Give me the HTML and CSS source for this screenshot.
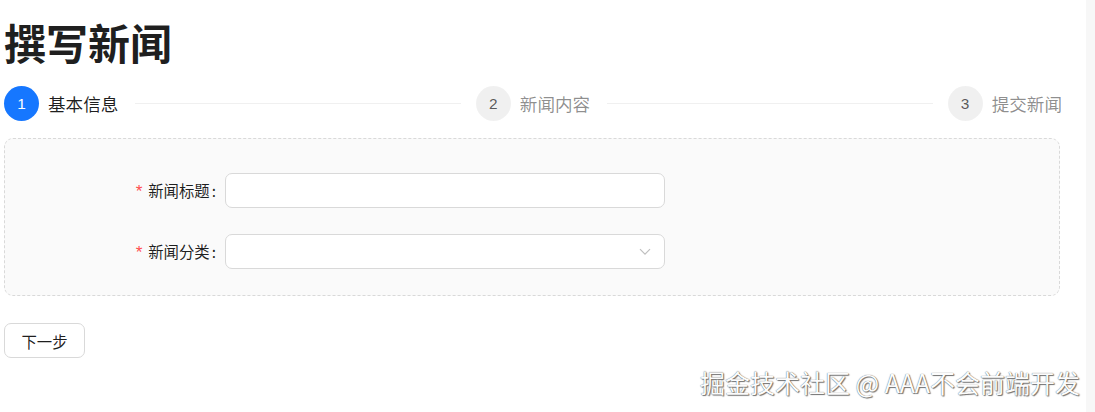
FILE: index.html
```html
<!DOCTYPE html>
<html lang="zh-CN">
<head>
<meta charset="utf-8">
<title>撰写新闻</title>
<link rel="stylesheet" href="styles.css">
</head>
<body>
<div class="page">
  <main class="main">
    <h1 class="title">撰写新闻</h1>
    <div class="steps">
      <div class="step active">
        <span class="step-icon">1</span>
        <span class="step-title">基本信息</span>
        <span class="step-line"></span>
      </div>
      <div class="step">
        <span class="step-icon">2</span>
        <span class="step-title">新闻内容</span>
        <span class="step-line"></span>
      </div>
      <div class="step last">
        <span class="step-icon">3</span>
        <span class="step-title">提交新闻</span>
      </div>
    </div>
    <div class="card">
      <div class="form-row">
        <label class="form-label"><span class="req">*</span>新闻标题<span class="colon">:</span></label>
        <div class="input"></div>
      </div>
      <div class="form-row">
        <label class="form-label"><span class="req">*</span>新闻分类<span class="colon">:</span></label>
        <div class="input select">
          <svg class="arrow" width="12" height="8" viewBox="0 0 12 8"><path d="M1 1.2 L6 6.2 L11 1.2" fill="none" stroke="#bfbfbf" stroke-width="1.2"/></svg>
        </div>
      </div>
    </div>
    <button class="btn">下一步</button>
  </main>
  <div class="scrollbar"></div>
</div>
<div class="watermark">掘金技术社区 @ AAA不会前端开发</div>
</body>
</html>
```
FILE: styles.css
```css
html, body {
  margin: 0;
  padding: 0;
  background: #fff;
  font-family: "Noto Sans CJK SC", "Noto Sans", sans-serif;
  color: rgba(0,0,0,0.88);
}
.page {
  display: flex;
  width: 1095px;
  height: 412px;
  overflow: hidden;
}
.main {
  width: 1058px;
  padding-left: 4px;
  flex: none;
}
.scrollbar {
  margin-left: auto;
  width: 9px;
  background: #f7f7f7;
  height: 412px;
}
.title {
  margin: 18px 0 0;
  font-size: 42px;
  line-height: 48px;
  font-weight: 700;
  color: rgba(0,0,0,0.88);
}
.steps {
  display: flex;
  margin-top: 20px;
  height: 35px;
  align-items: center;
}
.step {
  flex: 1;
  display: flex;
  align-items: center;
  min-width: 0;
}
.step + .step { padding-left: 15px; }
.step.last { flex: none; }
.step-icon {
  width: 35px;
  height: 35px;
  border-radius: 50%;
  background: rgba(0,0,0,0.06);
  color: rgba(0,0,0,0.65);
  font-family: "Liberation Sans", sans-serif;
  font-size: 15.4px;
  display: flex;
  align-items: center;
  justify-content: center;
  flex: none;
}
.step.active .step-icon {
  background: #1677ff;
  color: #fff;
}
.step-title {
  margin-left: 9px;
  font-size: 17.6px;
  line-height: 35px;
  color: rgba(0,0,0,0.45);
  white-space: nowrap;
}
.step.active .step-title { color: rgba(0,0,0,0.88); }
.step-line {
  flex: 1;
  height: 1px;
  background: rgba(5,5,5,0.06);
  margin-left: 17px;
}
.card {
  margin-top: 17px;
  width: 1054px;
  border: 1px dashed #d9d9d9;
  border-radius: 9px;
  background: #fafafa;
  padding: 34px 0 26px;
  display: flex;
  flex-direction: column;
  gap: 26px;
}
.form-row {
  display: grid;
  grid-template-columns: 220px 440px;
  align-items: center;
}
.form-label {
  text-align: right;
  font-size: 15.4px;
  padding-right: 9px;
  white-space: nowrap;
}
.colon {
  margin-left: 2px;
}
.req {
  color: #ff4d4f;
  font-family: "Liberation Mono", monospace;
  font-size: 17px;
  margin-right: 4px;
}
.input {
  height: 35px;
  box-sizing: border-box;
  border: 1px solid #d9d9d9;
  border-radius: 7px;
  background: #fff;
  position: relative;
}
.select .arrow {
  position: absolute;
  right: 13px;
  top: 13px;
}
.btn {
  margin-top: 27px;
  width: 81px;
  height: 35px;
  border: 1px solid #d9d9d9;
  border-radius: 7px;
  background: #fff;
  font-family: "Noto Sans CJK SC", sans-serif;
  font-size: 15.4px;
  color: rgba(0,0,0,0.88);
  padding: 0;
}
.watermark {
  position: absolute;
  right: 15px;
  top: 364px;
  font-size: 25px;
  line-height: 36px;
  color: #fcfcfc;
  text-shadow: 0 0 1px #444, 1px 1px 1px #777;
  white-space: nowrap;
  font-family: "Noto Sans CJK SC", "Liberation Sans", sans-serif;
}
```
